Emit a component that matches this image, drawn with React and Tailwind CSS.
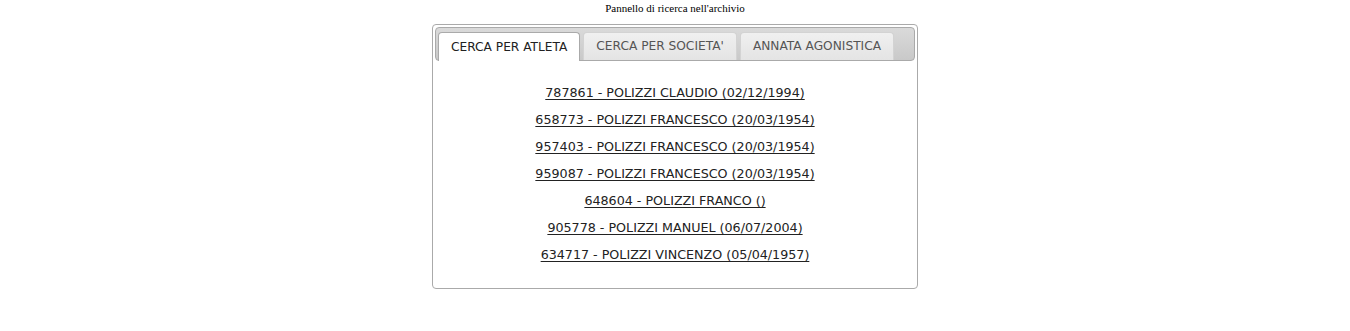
const athletes = [
  "787861 - POLIZZI CLAUDIO (02/12/1994)",
  "658773 - POLIZZI FRANCESCO (20/03/1954)",
  "957403 - POLIZZI FRANCESCO (20/03/1954)",
  "959087 - POLIZZI FRANCESCO (20/03/1954)",
  "648604 - POLIZZI FRANCO ()",
  "905778 - POLIZZI MANUEL (06/07/2004)",
  "634717 - POLIZZI VINCENZO (05/04/1957)"
];

const tabs = ["CERCA PER ATLETA", "CERCA PER SOCIETA'", "ANNATA AGONISTICA"];

export default function App() {
  return (
    <div className="min-h-[331px] bg-white">
      <p className="pt-[1px] text-center text-[11px] leading-[14px] text-black [font-family:'Liberation_Serif',serif]">
        Pannello di ricerca nell'archivio
      </p>

      <div className="mx-auto mt-[9px] w-[486px] rounded-[4px] border border-[#aaaaaa] p-[2px] [font-family:'DejaVu_Sans',Verdana,sans-serif]">
        <ul className="flex h-[34px] rounded-[4px] border border-[#aaaaaa] bg-gradient-to-b from-[#dadada] to-[#c9c9c9] px-[2px] pt-[4px]">
          {tabs.map((tab, i) => (
            <li
              key={tab}
              className={
                i === 0
                  ? "mr-[3px] -mb-[1px] flex h-[29px] items-center whitespace-nowrap rounded-t-[4px] border border-b-0 border-[#aaaaaa] bg-white px-[12px] text-[12.2px] text-[#212121]"
                  : "mr-[3px] flex h-[28px] items-center whitespace-nowrap rounded-t-[4px] border border-b-0 border-[#d3d3d3] bg-gradient-to-b from-[#f0f0f0] to-[#e4e4e4] px-[12px] text-[12.2px] text-[#555555]"
              }
            >
              {tab}
            </li>
          ))}
        </ul>

        <div className="flex flex-col items-center pt-[18px] pb-[18px]">
          {athletes.map((a) => (
            <a
              key={a}
              href="#"
              className="whitespace-nowrap text-[12.7px] leading-[27px] text-[#222222] underline underline-offset-[2px]"
            >
              {a}
            </a>
          ))}
        </div>
      </div>
    </div>
  );
}
